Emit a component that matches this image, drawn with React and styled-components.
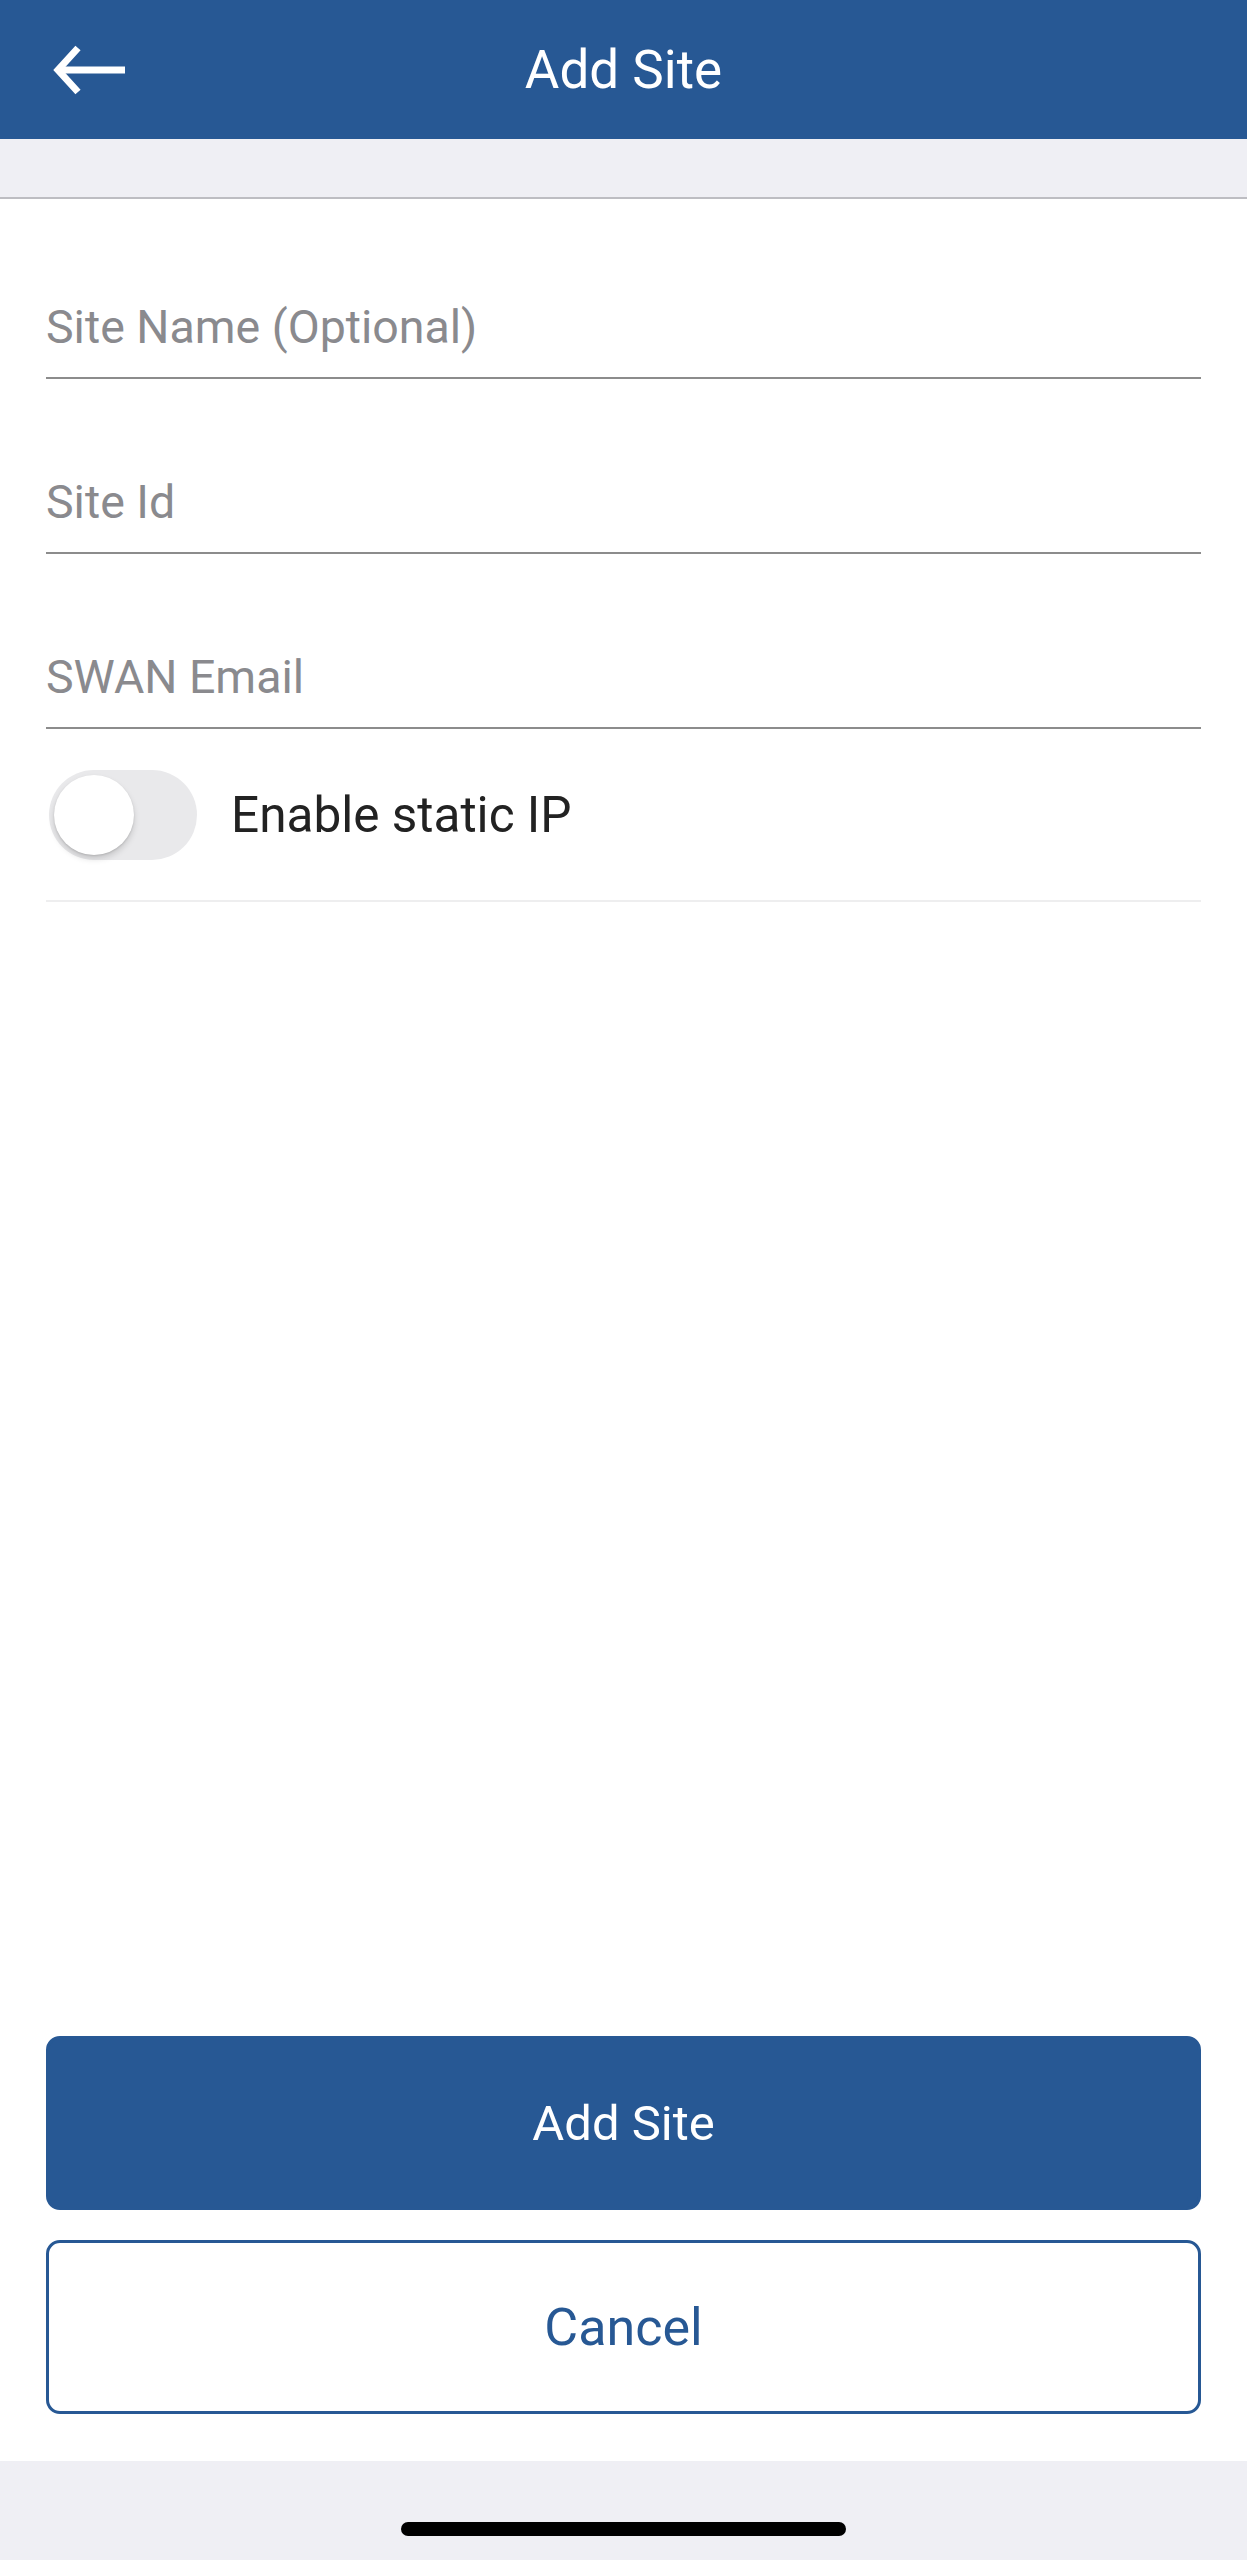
import React from 'react'
import styled, { createGlobalStyle } from "styled-components";

const Global = createGlobalStyle`
body {
  margin: 0;
  background: #fff;
  font-family: Roboto, "Liberation Sans", sans-serif;
}
`;

const Page = styled.div`
min-height: 2560px;
display: flex;
flex-direction: column;
background: #fff;
`;

const Header = styled.div`
height: 139px;
background: #275894;
display: grid;
grid-template-columns: 200px 1fr 200px;
align-items: center;
`;

const BackButton = styled.button`
border: none;
background: none;
padding: 0 0 0 53px;
display: flex;
align-items: center;
cursor: pointer;
`;

const Title = styled.h1`
margin: 0;
text-align: center;
color: #fff;
font-size: 53px;
font-weight: 400;
`;

const Band = styled.div`
height: 58px;
background: #efeff4;
border-bottom: 2px solid #bdbdc2;
`;

const Form = styled.div`
padding: 5px 46px 0 46px;
display: flex;
flex-direction: column;
`;

const Field = styled.div`
height: 175px;
box-sizing: border-box;
display: flex;
align-items: flex-end;
padding-bottom: 23px;
border-bottom: 2px solid #8c8c8c;
`;

const Input = styled.input`
width: 100%;
border: none;
outline: none;
padding: 0;
margin: 0;
height: 54px;
line-height: 54px;
font-family: Roboto, "Liberation Sans", sans-serif;
font-size: 46.5px;
color: #222;
background: transparent;
&::placeholder {
  color: #8a8a8e;
}
`;

const ToggleRow = styled.div`
height: 173px;
box-sizing: border-box;
display: flex;
align-items: center;
gap: 34px;
padding-left: 3px;
border-bottom: 2px solid #eeeeef;
`;

const Track = styled.div`
width: 148px;
height: 90px;
border-radius: 45px;
background: ${p => (p.on ? "#275894" : "#e9e9eb")};
display: flex;
align-items: center;
padding: 0 5px;
box-sizing: border-box;
justify-content: ${p => (p.on ? "flex-end" : "flex-start")};
`;

const Knob = styled.div`
width: 80px;
height: 80px;
border-radius: 50%;
background: #fff;
box-shadow: 0 4px 6px rgba(0, 0, 0, 0.15), 0 1px 2px rgba(0, 0, 0, 0.12);
`;

const ToggleLabel = styled.span`
font-size: 49.5px;
color: #222;
`;

const Spacer = styled.div`
flex: 1;
`;

const Actions = styled.div`
padding: 0 46px 47px 46px;
display: flex;
flex-direction: column;
gap: 30px;
`;

const Button = styled.button`
height: 174px;
border-radius: 14px;
box-sizing: border-box;
font-family: Roboto, "Liberation Sans", sans-serif;
font-size: ${p => (p.primary ? "49px" : "52px")};
cursor: pointer;
border: 3px solid #275894;
background: ${p => (p.primary ? "#275894" : "#fff")};
color: ${p => (p.primary ? "#fff" : "#275894")};
`;

const HomeBar = styled.div`
height: 99px;
background: #efeff4;
display: flex;
justify-content: center;
align-items: flex-end;
padding-bottom: 24px;
box-sizing: border-box;
`;

const Indicator = styled.div`
width: 445px;
height: 14px;
border-radius: 7px;
background: #000;
`;

export default function App() {
  return (
    <Page>
      <Global />
      <Header>
        <BackButton aria-label="Back">
          <svg width="72" height="50" viewBox="0 0 72 50">
            <polyline points="25,3 5,25 25,47" fill="none" stroke="#fff" strokeWidth="7" strokeLinejoin="miter" />
            <line x1="6" y1="25" x2="72" y2="25" stroke="#fff" strokeWidth="7" />
          </svg>
        </BackButton>
        <Title>Add Site</Title>
        <div />
      </Header>
      <Band />
      <Form>
        <Field><Input placeholder="Site Name (Optional)" /></Field>
        <Field><Input placeholder="Site Id" /></Field>
        <Field><Input placeholder="SWAN Email" /></Field>
        <ToggleRow>
          <Track><Knob /></Track>
          <ToggleLabel>Enable static IP</ToggleLabel>
        </ToggleRow>
      </Form>
      <Spacer />
      <Actions>
        <Button primary>Add Site</Button>
        <Button>Cancel</Button>
      </Actions>
      <HomeBar><Indicator /></HomeBar>
    </Page>
  )
}
